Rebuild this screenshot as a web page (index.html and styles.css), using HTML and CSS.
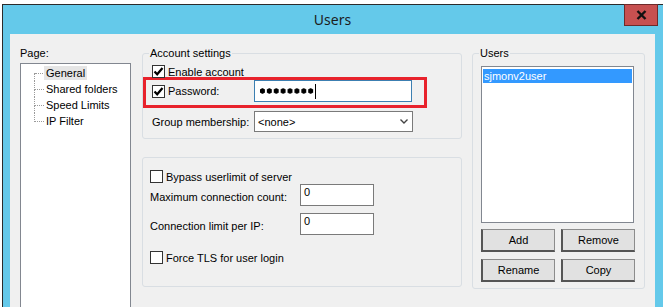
FILE: index.html
```html
<!DOCTYPE html>
<html lang="en">
<head>
  <meta charset="UTF-8" />
  <meta name="viewport" content="width=device-width, initial-scale=1.0">
  <title>Users</title>
  <link rel="stylesheet" href="styles.css">
</head>
<body>
  <div class="window">
    <div class="titlebar">
      <span></span>
      <span class="title">Users</span>
      <span class="close">
        <svg width="11" height="10" viewBox="0 0 11 10"><path d="M1.5 1 L9.5 9 M9.5 1 L1.5 9" stroke="#111" stroke-width="2.4" fill="none"/></svg>
      </span>
    </div>

    <div class="client">
      <div class="pages">
        <div class="caption">Page:</div>
        <ul class="tree">
          <li><span class="node current">General</span></li>
          <li><span class="node">Shared folders</span></li>
          <li><span class="node">Speed Limits</span></li>
          <li><span class="node">IP Filter</span></li>
        </ul>
      </div>

      <div class="settings">
        <fieldset class="group account">
          <legend>Account settings</legend>
          <label class="check enable">
            <span class="box"><svg width="11" height="11" viewBox="0 0 11 11"><path d="M1.5 5.5 L4.2 8.3 L9.5 2" stroke="#000" stroke-width="2.2" fill="none"/></svg></span>
            Enable account
          </label>
          <div class="marked">
            <label class="check pass-label">
              <span class="box"><svg width="11" height="11" viewBox="0 0 11 11"><path d="M1.5 5.5 L4.2 8.3 L9.5 2" stroke="#000" stroke-width="2.2" fill="none"/></svg></span>
              Password:
            </label>
            <div class="textbox focused password"><span class="dots"></span><span class="caret"></span></div>
          </div>
          <div class="row group-row">
            <span class="row-label">Group membership:</span>
            <div class="dropdown">
              <span>&lt;none&gt;</span>
              <svg width="8" height="5" viewBox="0 0 8 5"><path d="M0.5 0.5 L4 4 L7.5 0.5" stroke="#444" stroke-width="1.4" fill="none"/></svg>
            </div>
          </div>
        </fieldset>

        <fieldset class="group limits">
          <label class="check bypass"><span class="box"></span>Bypass userlimit of server</label>
          <div class="row limit-row first-limit">
            <span class="limit-label">Maximum connection count:</span>
            <div class="textbox number">0</div>
          </div>
          <div class="row limit-row second-limit">
            <span class="limit-label">Connection limit per IP:</span>
            <div class="textbox number">0</div>
          </div>
          <label class="check tls"><span class="box"></span>Force TLS for user login</label>
        </fieldset>
      </div>

      <fieldset class="group users">
        <legend>Users</legend>
        <ul class="listbox">
          <li class="selected">sjmonv2user</li>
        </ul>
        <div class="buttons">
          <button type="button">Add</button>
          <button type="button">Remove</button>
          <button type="button">Rename</button>
          <button type="button">Copy</button>
        </div>
      </fieldset>
    </div>
  </div>
</body>
</html>
```

FILE: styles.css
```css
html, body {
  height: 307px;
}
body {
  margin: 0;
  background-color: #fff;
  font-family: "Liberation Sans", Arial, sans-serif;
  font-size: 11px;
  color: #000;
  overflow: hidden;
}
.window {
  box-sizing: border-box;
  margin: 4px 0 0 2px;
  width: 662px;
  height: 303px;
  border: 1px solid #2b2b2b;
  border-bottom: none;
  background-color: #64c9ea;
  padding: 0 8px 0 7px;
}
.titlebar {
  display: grid;
  grid-template-columns: 1fr auto 1fr;
  height: 29px;
}
.title {
  font-family: "Noto Sans", "Open Sans", sans-serif;
  font-size: 14px;
  color: #1c1c1c;
  line-height: 29px;
}
.close {
  justify-self: end;
  align-self: start;
  margin-top: -1px;
  margin-right: -3px;
  width: 32px;
  height: 20px;
  background-color: #c75050;
  border: 1px solid #6e2a2a;
  display: flex;
  align-items: center;
  justify-content: center;
}
.client {
  box-sizing: border-box;
  background-color: #f0f0f0;
  height: 273px;
  padding: 13px 0 0 10px;
  display: flex;
  align-items: flex-start;
  overflow: hidden;
}

/* page tree */
.pages {
  width: 111px;
}
.caption {
  line-height: 13px;
}
.tree {
  list-style: none;
  margin: 3px 0 0;
  padding: 1px 0 0;
  height: 260px;
  background-color: #fff;
  border: 1px solid #828790;
}
.tree li {
  position: relative;
  height: 16px;
  line-height: 16px;
  padding-left: 23px;
}
.tree li::before {
  content: "";
  position: absolute;
  left: 13px;
  top: 0;
  width: 9px;
  height: 8px;
  border-left: 1px dotted #9a9a9a;
  border-bottom: 1px dotted #9a9a9a;
}
.tree li:first-child::before {
  border-left: none;
  left: 14px;
  width: 8px;
}
.tree li:not(:last-child)::after {
  content: "";
  position: absolute;
  left: 13px;
  top: 8px;
  height: 8px;
  border-left: 1px dotted #9a9a9a;
}
.node {
  padding: 1px 2px;
}
.node.current {
  background-color: #e5e5e5;
}

/* group boxes */
.group {
  margin: 0;
  padding: 0;
  border: 1px solid #d9dee3;
  border-radius: 3px;
  min-width: 0;
}
.group legend {
  margin-left: 6px;
  padding: 0 1px;
  line-height: 13px;
}
.settings {
  margin-left: 11px;
  width: 320px;
}
.check {
  display: flex;
  align-items: center;
  height: 13px;
}
.box {
  width: 11px;
  height: 11px;
  border: 1px solid #333;
  background-color: #fff;
  margin-right: 3px;
  display: flex;
}
.enable {
  margin: 5px 0 0 9px;
}
.marked {
  margin-top: -1px;
  width: 269px;
  border: 3px solid #e8222c;
  padding: 0 3px 3px 6px;
  display: flex;
  align-items: center;
}
.pass-label {
  width: 102px;
}
.textbox {
  background-color: #fff;
  border: 1px solid #7a7a7a;
}
.password {
  width: 158px;
  height: 22px;
  border-color: #3c7fb1;
  display: flex;
  align-items: center;
  padding-left: 4px;
  box-sizing: border-box;
}
.dots {
  width: 55px;
  height: 6px;
  background: radial-gradient(circle, #000 2.4px, transparent 2.9px) 0 0 / 6.9px 6px repeat-x;
}
.caret {
  width: 1px;
  height: 15px;
  margin-left: 1px;
  background-color: #000;
}
.row {
  display: flex;
  align-items: center;
}
.group-row {
  margin: 3px 0 6px 9px;
}
.row-label {
  width: 102px;
}
.dropdown {
  width: 150px;
  height: 19px;
  background-color: #fff;
  border: 1px solid #7a7a7a;
  display: flex;
  align-items: center;
  justify-content: space-between;
  padding: 0 4px 0 3px;
}

.limits {
  margin-top: 18px;
  padding-bottom: 22px;
}
.bypass {
  margin: 12px 0 0 7px;
}
.tls {
  margin: 16px 0 0 7px;
}
.limit-row {
  margin-left: 7px;
}
.first-limit {
  margin-top: 1px;
}
.second-limit {
  margin-top: 7px;
}
.limit-label {
  width: 150px;
  padding-top: 4px;
}
.number {
  width: 69px;
  height: 19px;
  padding: 1px 0 0 3px;
}

/* users */
.users {
  margin-left: 10px;
  width: 173px;
  box-sizing: border-box;
  padding-bottom: 6px;
}
.listbox {
  list-style: none;
  margin: 6px 0 0 8px;
  padding: 1px;
  width: 149px;
  height: 153px;
  background-color: #fff;
  border: 1px solid #828790;
}
.listbox .selected {
  margin-top: 1px;
  height: 14px;
  line-height: 14px;
  padding-left: 1px;
  background-color: #3399ff;
  color: #fff;
}
.buttons {
  margin: 6px 0 0 8px;
  display: grid;
  grid-template-columns: 74px 74px;
  column-gap: 6px;
  row-gap: 7px;
}
button {
  height: 23px;
  padding: 0;
  font-family: inherit;
  font-size: 11px;
  color: #000;
  background-color: #e1e1e1;
  border: 1px solid #8c8c8c;
  border-left: 2px solid #555;
  border-bottom: 2px solid #555;
}
```
